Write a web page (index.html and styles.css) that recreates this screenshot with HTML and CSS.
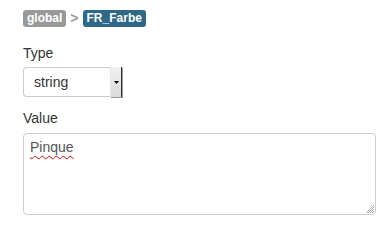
FILE: index.html
```html
<!DOCTYPE html>
<html>
<head>
<meta charset="utf-8">
<link rel="stylesheet" href="styles.css">
</head>
<body>
<div class="page">
  <div class="crumbs">
    <span class="badge badge-gray">global</span>
    <span class="sep">&gt;</span>
    <span class="badge badge-blue">FR_Farbe</span>
  </div>
  <label class="label">Type</label>
  <div class="select">
    <span class="select-text">string</span>
    <span class="select-btn"><svg width="5" height="3" viewBox="0 0 5 3"><path d="M0 0H5L2.5 3Z" fill="#000"/></svg></span>
  </div>
  <label class="label label-value">Value</label>
  <div class="textarea">
    <span class="spell">Pinque</span>
    <svg class="grip" width="9" height="9" viewBox="0 0 9 9"><path d="M9 1L1 9M9 3L3 9M9 5L5 9M9 7L7 9" stroke="#999" stroke-width="0.8"/></svg>
  </div>
</div>
</body>
</html>
```
FILE: styles.css
```css
html, body { margin: 0; padding: 0; background: #fff; }
body { font-family: "Liberation Sans", Arial, sans-serif; color: #333; }
.page { padding: 10px 7px 0 23px; display: flex; flex-direction: column; align-items: flex-start; }
.crumbs { display: flex; align-items: center; height: 17px; }
.badge { display: inline-block; font-size: 12px; font-weight: bold; color: #fff; border-radius: 3px; padding: 0 4px; line-height: 17px; height: 17px; }
.badge-gray { background: #999; }
.badge-blue { background: #2d6987; }
.sep { color: #999; font-size: 14px; font-weight: bold; margin: 0 4px; line-height: 17px; }
.label { font-size: 14px; margin-top: 18px; line-height: 16px; display: block; }
.label-value { margin-top: 13px; }
.select { margin-top: 6px; width: 99px; height: 30px; border: 1px solid #ccc; border-right: none; border-radius: 4px 0 0 4px; display: flex; align-items: stretch; box-sizing: border-box; }
.select-text { flex: 1; font-size: 14px; padding-left: 10px; line-height: 28px; color: #333; }
.select-btn { width: 10px; margin: -1px 0; background: linear-gradient(#f2f2f2, #dadada); border-left: 1px solid #e6e6e6; border-right: 1px solid #333; box-shadow: 1px 1px 0 #999; display: flex; align-items: center; justify-content: center; }
.textarea { position: relative; margin-top: 7px; height: 82px; border: 1px solid #ccc; border-radius: 4px; box-sizing: border-box; padding: 4px 6px; font-size: 14px; line-height: 18px; align-self: stretch; }
.spell { text-decoration: underline wavy #e00; text-decoration-thickness: 1px; text-underline-offset: 3px; color: #555; }
.grip { position: absolute; right: 1px; bottom: 1px; }
```
